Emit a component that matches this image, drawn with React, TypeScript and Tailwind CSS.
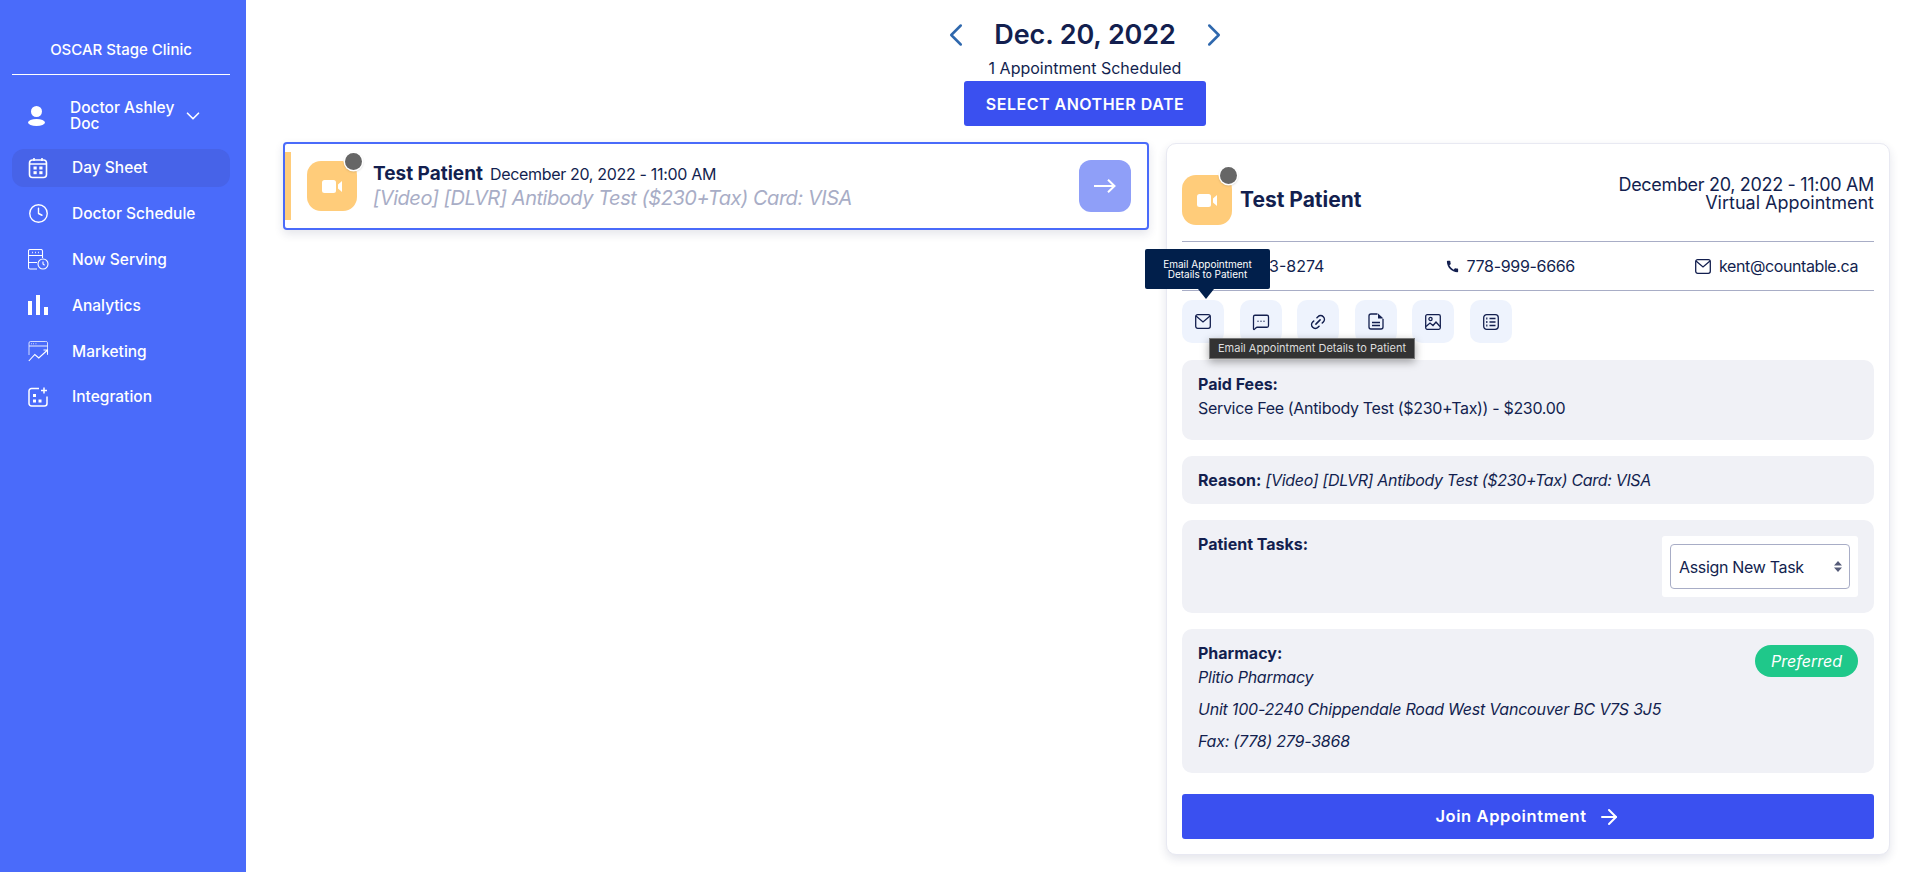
import React from "react";
import { Clock, Link2, MessageSquareMore, ChevronDown, ChevronLeft, ChevronRight, ArrowRight } from "lucide-react";
import { MdCall } from "react-icons/md";

const CalendarIcon = () => (
  <svg width="20" height="22" viewBox="0 0 20 22" fill="none" stroke="white" strokeWidth="1.6">
    <rect x="1.5" y="3" width="17" height="17.5" rx="3" />
    <path d="M6 1v3M14 1v3M2 7h16" />
    <rect x="5.5" y="9.5" width="3.2" height="3" fill="white" stroke="none" />
    <rect x="11.3" y="9.5" width="3.2" height="3" fill="white" stroke="none" />
    <rect x="5.5" y="14.2" width="3.2" height="3" fill="white" stroke="none" />
    <rect x="11.3" y="14.2" width="3.2" height="3" fill="white" stroke="none" />
  </svg>
);
const ServingIcon = () => (
  <svg width="21" height="21" viewBox="0 0 21 21" fill="none" stroke="white" strokeWidth="1.1">
    <path d="M9 20H2a1.5 1.5 0 0 1-1.5-1.5V2A1.5 1.5 0 0 1 2 .5h11A1.5 1.5 0 0 1 14.5 2v7" />
    <path d="M1 6.5h13M1 13.5h8" />
    <path d="M4 3.5h.8M7 3.5h.8M10 3.5h.8" strokeWidth="1.4" />
    <circle cx="15" cy="15" r="5" />
    <path d="M15 12.5V15l1.6 1.2" />
  </svg>
);
const BarsIcon = () => (
  <svg width="20" height="20" viewBox="0 0 20 20" fill="white">
    <rect x="0" y="6" width="4" height="14" />
    <rect x="8" y="0" width="4" height="20" />
    <rect x="16" y="12" width="4" height="8" />
  </svg>
);
const MarketingIcon = () => (
  <svg width="21" height="21" viewBox="0 0 21 21" fill="none" stroke="white" strokeWidth="0.9">
    <path d="M1 14V2A1.5 1.5 0 0 1 2.500.5h15A1.500 1.500 0 0 1 19.500 2v12" opacity="0.85" />
    <path d="M1 5h18.500" />
    <path d="M3 2.800h.7M5.300 2.800h.7M7.600 2.800h.7" strokeWidth="1.100" />
    <path d="M.8 20l6-6.500 4 3.500 8.200-7.500M15.500 9h4v3.800" strokeWidth="1.100" />
  </svg>
);
const IntegrationIcon = () => (
  <svg width="20" height="20" viewBox="0 0 20 20" fill="none" stroke="white" strokeWidth="1.500">
    <path d="M11 1.500H3.500a2.500 2.500 0 0 0-2.500 2.500v12.500A2.500 2.500 0 0 0 3.500 19h13a2.500 2.500 0 0 0 2.500-2.500V9.500" />
    <path d="M16 .5v6M13 3.500h6" />
    <rect x="5" y="7" width="3" height="3" fill="white" stroke="none" />
    <rect x="5" y="12.500" width="3" height="3" fill="white" stroke="none" />
    <rect x="10.500" y="12.500" width="3" height="3" fill="white" stroke="none" />
  </svg>
);
const UserIcon = () => (
  <svg width="17" height="20" viewBox="0 0 17 20" fill="white">
    <circle cx="8.500" cy="5.500" r="5.500" />
    <ellipse cx="8.500" cy="16.500" rx="8.500" ry="3.500" />
  </svg>
);
const VideoIcon = () => (
  <svg width="20" height="13" viewBox="0 0 20 13" fill="white">
    <rect x="0" y="0" width="14" height="13" rx="2.500" />
    <path d="M16 4.500 20 1v11l-4-3.500z" />
  </svg>
);
const MailIcon = () => (
  <svg width="16" height="15" viewBox="0 0 16 15" fill="none" stroke="#131f4f" strokeWidth="1.300">
    <rect x=".7" y=".7" width="14.600" height="13.600" rx="2" />
    <path d="M1 2l7 6 7-6" />
  </svg>
);
const FileIcon = () => (
  <svg width="16" height="17" viewBox="0 0 16 17" fill="none" stroke="#131f4f" strokeWidth="1.300">
    <path d="M9.500 1H3a2 2 0 0 0-2 2v11a2 2 0 0 0 2 2h10a2 2 0 0 0 2-2V6" />
    <path d="M10 .5 15.500 5.500H10z" fill="#131f4f" stroke="none" />
    <path d="M4 9.500h8M4 12.500h8" strokeWidth="1.500" />
  </svg>
);
const ImageIcon = () => (
  <svg width="16" height="16" viewBox="0 0 16 16" fill="none" stroke="#131f4f" strokeWidth="1.300">
    <rect x=".7" y=".7" width="14.600" height="14.600" rx="1.500" />
    <circle cx="5.500" cy="5" r="1.600" />
    <path d="M1 12.500l4-3.500 3 2.500 3-3.500 4 4.500" />
  </svg>
);
const ListIcon = () => (
  <svg width="16" height="16" viewBox="0 0 16 16" fill="none" stroke="#131f4f" strokeWidth="1.300">
    <rect x=".7" y=".7" width="14.600" height="14.600" rx="3" />
    <path d="M6.500 4.500h6M6.500 8h6M6.500 11.500h6" />
    <path d="M3.200 4.500h1.200M3.200 8h1.200M3.200 11.500h1.200" strokeWidth="1.800" />
  </svg>
);
const LongArrow = () => (
  <svg width="22" height="14" viewBox="0 0 22 14" fill="none" stroke="white" strokeWidth="2">
    <path d="M0 7h20.500M14 .7 20.500 7 14 13.300" />
  </svg>
);

const nav = [
  { label: "Day Sheet", icon: <CalendarIcon />, active: true },
  { label: "Doctor Schedule", icon: <Clock size={21} strokeWidth={1.6} color="white" /> },
  { label: "Now Serving", icon: <ServingIcon /> },
  { label: "Analytics", icon: <BarsIcon /> },
  { label: "Marketing", icon: <MarketingIcon /> },
  { label: "Integration", icon: <IntegrationIcon /> },
];

const actions = [
  <MailIcon />,
  <MessageSquareMore size={18} strokeWidth={1.700} color="#131f4f" />,
  <Link2 size={18} strokeWidth={2} color="#131f4f" className="-rotate-45" />,
  <FileIcon />,
  <ImageIcon />,
  <ListIcon />,
];

function ApptIcon() {
  return (
    <div className="relative flex h-[50px] w-[50px] shrink-0 items-center justify-center rounded-[14px] bg-[#ffcc7a]">
      <VideoIcon />
      <span className="absolute -right-[5px] -top-[8px] h-[17px] w-[17px] rounded-full bg-[#666666] shadow-[0_0_0_1.500px_#fff,0_1px_3px_rgba(0,0,0,0.4)]" />
    </div>
  );
}

export default function App() {
  return (
    <div className="flex h-[872px] overflow-hidden bg-white text-[16px] tracking-[-0.02em] text-[#131f4f] [font-family:Inter,'Liberation_Sans',sans-serif]">
      <aside className="flex w-[246px] shrink-0 flex-col bg-[#4a6bfa] pl-3 pr-4 tracking-normal text-white">
        <div className="flex h-[75px] items-end justify-center border-b border-white pb-[13px] text-[15px] font-medium">OSCAR Stage Clinic</div>
        <div className="mt-[24px] flex h-[34px] items-center pl-[16px]">
          <UserIcon />
          <div className="ml-[25px] w-[112px] text-[15.500px] font-medium leading-[16px]">Doctor Ashley Doc</div>
          <ChevronDown size={22} strokeWidth={1.800} />
        </div>
        <nav className="mt-[16px] flex flex-col gap-[7.800px]">
          {nav.map((n) => (
            <div key={n.label} className={`flex h-[38px] items-center rounded-[12px] pl-[16px] text-[15.500px] font-medium ${n.active ? "bg-[#4763e8]" : ""}`}>
              <span className="flex w-[44px] shrink-0 items-center">{n.icon}</span>
              {n.label}
            </div>
          ))}
        </nav>
      </aside>

      <main className="flex min-w-0 flex-1 flex-col pl-[37px] pr-[28px]">
        <header className="flex flex-col items-center pr-[3px]">
          <div className="mt-[15px] flex h-[40px] items-center">
            <ChevronLeft size={38} strokeWidth={1.600} color="#2f68ad" />
            <h1 className="mx-[19px] text-[27px] font-semibold tracking-[-0.005em]">Dec. 20, 2022</h1>
            <ChevronRight size={38} strokeWidth={1.600} color="#2f68ad" />
          </div>
          <p className="flex h-[25px] items-center text-[16px] tracking-normal">1 Appointment Scheduled</p>
          <button className="mt-px h-[45px] w-[242px] rounded-[3px] bg-[#3a50f0] text-[16px] font-semibold tracking-[0.5px] text-white">SELECT ANOTHER DATE</button>
        </header>

        <div className="mt-[16px] flex items-start justify-between">
          <section className="flex h-[88px] w-[866px] items-center rounded-[4px] border-2 border-[#4a6bfa] bg-white shadow-[0_4px_10px_rgba(30,40,90,0.12)]">
            <div className="h-[68px] w-[6px] bg-[#ffcc7a]" />
            <div className="ml-[16px]"><ApptIcon /></div>
            <div className="ml-[16px] min-w-0 flex-1">
              <div className="flex h-[24px] items-center">
                <strong className="text-[19px] font-bold tracking-normal">Test Patient</strong>
                <span className="ml-[7px]">December 20, 2022 - 11:00 AM</span>
              </div>
              <div className="flex h-[24px] items-center text-[20px] italic tracking-[-0.023em] text-[#a8adc6]">[Video] [DLVR] Antibody Test ($230+Tax) Card: VISA</div>
            </div>
            <div className="mr-[16px] flex h-[52px] w-[52px] items-center justify-center rounded-[12px] bg-[#8f9ff8]">
              <LongArrow />
            </div>
          </section>

          <section className="relative mt-px flex h-[712px] w-[724px] flex-col rounded-[10px] border border-[#e8e9f2] bg-white px-[15px] pt-[31px] shadow-[0_4px_10px_rgba(30,40,90,0.12)]">
            <div className="flex h-[50px] items-center">
              <ApptIcon />
              <strong className="ml-[8px] text-[21px] font-bold tracking-normal">Test Patient</strong>
              <div className="mb-[12px] ml-auto text-right text-[18px] leading-[18px]">
                <div>December 20, 2022 - 11:00 AM</div>
                <div className="tracking-normal">Virtual Appointment</div>
              </div>
            </div>
            <div className="mt-[16px] flex h-[50px] items-center justify-between border-y border-[#a8adc6] pl-[8px] pr-[16px]">
              <span className="flex items-center gap-[9px] tracking-normal"><MdCall size={15} />778-333-8274</span>
              <span className="flex items-center gap-[7px]"><MdCall size={15} />778-999-6666</span>
              <span className="flex items-center gap-[8px] tracking-[-0.025em]"><MailIcon />kent@countable.ca</span>
            </div>
            <div className="mt-[9px] flex gap-[15.500px]">
              {actions.map((a, i) => (
                <div key={i} className="flex h-[43px] w-[42px] items-center justify-center rounded-[10px] bg-[#eef3fd]">{a}</div>
              ))}
            </div>

            <div className="mt-[17px] flex flex-col gap-[16px]">
              <div className="h-[80px] rounded-[10px] bg-[#f0f1f6] px-[16px] pt-[12px] leading-[24px]">
                <strong className="block font-bold tracking-normal">Paid Fees:</strong>
                Service Fee (Antibody Test ($230+Tax)) - $230.00
              </div>
              <div className="h-[48px] rounded-[10px] bg-[#f0f1f6] px-[16px] pt-[12px] leading-[24px]">
                <strong className="font-bold tracking-normal">Reason:</strong> <em>[Video] [DLVR] Antibody Test ($230+Tax) Card: VISA</em>
              </div>
              <div className="flex h-[93px] justify-between rounded-[10px] bg-[#f0f1f6] pl-[16px] pr-[16px] pt-[12px] leading-[24px]">
                <strong className="font-bold tracking-normal">Patient Tasks:</strong>
                <div className="mt-[4px] h-[61px] w-[196px] rounded-[3px] bg-white p-[8px]">
                  <div className="relative">
                    <select className="h-[45px] w-[180px] appearance-none rounded-[4px] border border-[#a8adc6] bg-white pl-[8px] text-[16px] text-[#131f4f]">
                      <option>Assign New Task</option>
                    </select>
                    <svg className="pointer-events-none absolute right-[8px] top-[17px]" width="8" height="11" viewBox="0 0 8 11" fill="#555b78"><path d="M4 0l4 4.500H0zM4 11l4-4.500H0z" /></svg>
                  </div>
                </div>
              </div>
              <div className="flex h-[144px] justify-between rounded-[10px] bg-[#f0f1f6] px-[16px] pt-[12px] leading-[24px]">
                <div>
                  <strong className="block font-bold tracking-normal">Pharmacy:</strong>
                  <div className="flex flex-col gap-[8px] italic tracking-[-0.014em]">
                    <span>Plitio Pharmacy</span>
                    <span>Unit 100-2240 Chippendale Road West Vancouver BC V7S 3J5</span>
                    <span>Fax: (778) 279-3868</span>
                  </div>
                </div>
                <span className="mt-[4px] flex h-[32px] w-[103px] items-center justify-center rounded-full bg-[#1fc88a] italic tracking-normal text-white">Preferred</span>
              </div>
            </div>

            <button className="mt-[21px] flex h-[45px] shrink-0 items-center justify-center gap-[10px] rounded-[3px] bg-[#3a50f0] text-[16.500px] font-semibold tracking-[0.6px] text-white">
              Join Appointment <ArrowRight size={24} strokeWidth={2} />
            </button>

            <div className="absolute left-[-22px] top-[105px] flex h-[40px] w-[125px] items-center justify-center rounded-[2px] bg-[#011f4b] text-center text-[10px] leading-[10px] tracking-normal text-white">
              Email Appointment<br />Details to Patient
              <span className="absolute left-[53px] top-[40px] h-0 w-0 border-x-[8px] border-t-[10px] border-x-transparent border-t-[#011f4b]" />
            </div>
            <div className="absolute left-[42px] top-[194px] flex h-[21px] w-[206px] items-center justify-center border border-[#777777] bg-[#333333] text-[11px] tracking-normal text-[#dddddd] shadow-[0_3px_8px_rgba(0,0,0,0.35)]">
              Email Appointment Details to Patient
            </div>
          </section>
        </div>
      </main>
    </div>
  );
}
